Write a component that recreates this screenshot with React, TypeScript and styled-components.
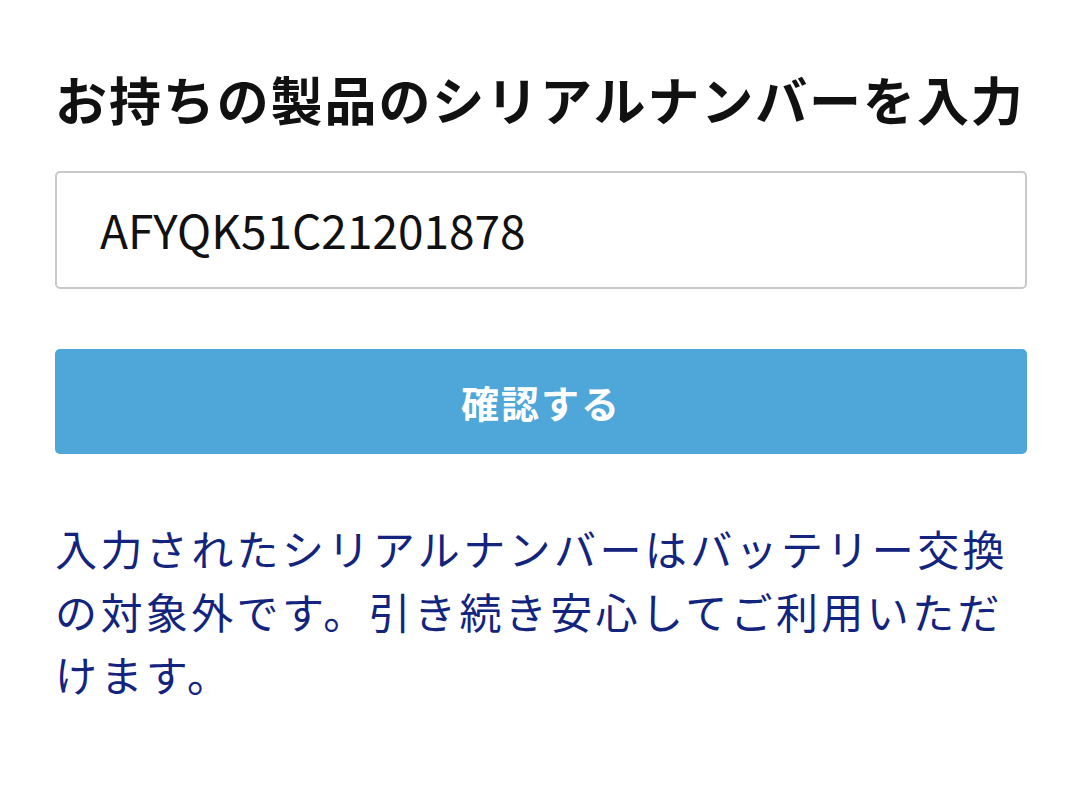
import React from 'react';
import styled, { createGlobalStyle } from 'styled-components';

const GlobalStyle = createGlobalStyle`
  html, body {
    margin: 0;
    padding: 0;
    background: #ffffff;
  }
  body {
    font-family: "Noto Sans CJK JP", "Noto Sans", sans-serif;
  }
`;

const Page = styled.div`
  display: flex;
  flex-direction: column;
  padding: 62px 53px 0 55px;
`;

const Title = styled.h1`
  margin: 0;
  font-size: 52px;
  line-height: 73px;
  font-weight: 700;
  letter-spacing: 1.9px;
  color: #111111;
  white-space: nowrap;
`;

const SerialInput = styled.input`
  box-sizing: border-box;
  margin-top: 36px;
  width: 100%;
  height: 118px;
  padding: 0 0 2px 43px;
  border: 2px solid #c9c9c9;
  border-radius: 5px;
  background: #ffffff;
  font-family: "Noto Sans CJK JP", "Noto Sans", sans-serif;
  font-size: 46px;
  font-weight: 400;
  color: #111111;
  outline: none;
`;

const ConfirmButton = styled.button`
  margin-top: 60px;
  width: 100%;
  height: 105px;
  border: none;
  border-radius: 5px;
  background: #4ea6d9;
  color: #ffffff;
  font-family: "Noto Sans CJK JP", "Noto Sans", sans-serif;
  font-size: 38px;
  font-weight: 700;
  letter-spacing: 2px;
  cursor: pointer;
`;

const Notice = styled.p`
  margin: 62px 0 0;
  font-size: 42px;
  line-height: 63px;
  letter-spacing: 3.4px;
  color: #13247f;
  line-break: strict;
`;

const App = () => {
  return (
    <>
      <GlobalStyle />
      <Page>
        <Title>お持ちの製品のシリアルナンバーを入力</Title>
        <SerialInput type="text" defaultValue="AFYQK51C21201878" readOnly />
        <ConfirmButton type="button">確認する</ConfirmButton>
        <Notice>
          入力されたシリアルナンバーはバッテリー交換の対象外です。引き続き安心してご利用いただけます。
        </Notice>
      </Page>
    </>
  );
};

export default App;
